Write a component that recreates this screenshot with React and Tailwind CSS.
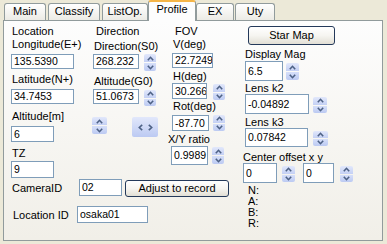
const Label = ({ children, className = "" }) => (
  <div className={`h-[12px] leading-[12px] whitespace-nowrap ${className}`}>{children}</div>
);

const Field = ({ value, className = "" }) => (
  <div
    className={`flex items-center shrink-0 overflow-hidden whitespace-nowrap bg-white border border-[#7f9db9] pl-[2px] text-[10.5px] leading-none ${className}`}
  >
    {value}
  </div>
);

const Chevron = ({ dir }) => {
  const d = {
    up: "M0.8 4.2 L3.5 1.3 L6.2 4.2",
    down: "M0.8 0.8 L3.5 3.7 L6.2 0.8",
  }[dir];
  return (
    <svg width="7" height="5" viewBox="0 0 7 5">
      <path d={d} fill="none" stroke="#4d6185" strokeWidth="1.6" />
    </svg>
  );
};

const SideChevron = ({ dir }) => {
  const d = dir === "left" ? "M4.2 0.8 L1.3 3.5 L4.2 6.2" : "M0.8 0.8 L3.7 3.5 L0.8 6.2";
  return (
    <svg width="5" height="7" viewBox="0 0 5 7">
      <path d={d} fill="none" stroke="#4d6185" strokeWidth="1.6" />
    </svg>
  );
};

// XP style up/down spinner
const Spin = ({ className = "" }) => (
  <div className={`flex flex-col gap-px shrink-0 ${className}`}>
    <div className="flex-1 flex items-center justify-center rounded-t-[2px] bg-linear-to-b from-[#e2e8fb] to-[#c4d0f4]">
      <Chevron dir="up" />
    </div>
    <div className="flex-1 flex items-center justify-center rounded-b-[2px] bg-linear-to-b from-[#d6dff9] to-[#bccaf2]">
      <Chevron dir="down" />
    </div>
  </div>
);

const Button = ({ children, className = "" }) => (
  <div
    className={`flex items-center justify-center shrink-0 rounded-[3px] border border-[#24395a] bg-linear-to-b from-white via-[#f6f5f1] to-[#e2dfd5] leading-none ${className}`}
  >
    {children}
  </div>
);

const tabIdle =
  "h-[17px] border border-b-0 border-[#919b9c] rounded-t-[3px] bg-linear-to-b from-white to-[#ecebe5] text-center leading-[14px]";

export default function App() {
  return (
    <div className="w-[387px] h-[244px] overflow-hidden bg-[#ece9d8] text-black text-[11px] font-['Liberation_Sans',Arial,sans-serif]">
      {/* Tabs */}
      <div className="h-[20px] flex items-end">
        <div className={`ml-[4px] w-[42px] ${tabIdle}`}>Main</div>
        <div className={`ml-[2px] w-[52px] ${tabIdle}`}>Classify</div>
        <div className={`ml-[2px] w-[46px] ${tabIdle}`}>ListOp.</div>
        <div className="relative z-10 -mb-px w-[48px] h-[21px] border-x border-[#919b9c] border-t-2 border-t-[#f5b548] rounded-t-[3px] bg-[#fdfdfd] text-center leading-[14px]">
          Profile
        </div>
        <div className={`w-[38px] ${tabIdle}`}>EX</div>
        <div className={`ml-px w-[40px] ${tabIdle}`}>Uty</div>
      </div>

      {/* Tab page */}
      <div className="ml-[3px] w-[380px] h-[221px] border border-[#919b9c] bg-linear-to-b from-[#fdfdfd] to-[#f1efe8] flex pt-[4px]">
        <div className="ml-[7px] w-[232px] flex flex-col">
          <div className="flex">
            {/* Location */}
            <div className="w-[82px] flex flex-col items-start">
              <Label className="ml-px">Location</Label>
              <Label className="ml-px mt-px">Longitude(E+)</Label>
              <Field value="135.5390" className="mt-[4px] w-[63px] h-[15px]" />
              <Label className="ml-px mt-[4px]">Latitude(N+)</Label>
              <Field value="34.7453" className="mt-[4px] w-[63px] h-[15px]" />
              <Label className="ml-px mt-[6px]">Altitude[m]</Label>
              <Field value="6" className="mt-[4px] w-[43px] h-[16px]" />
              <Label className="ml-px mt-[5px]">TZ</Label>
              <Field value="9" className="mt-[2px] w-[43px] h-[17px]" />
            </div>

            {/* Direction */}
            <div className="w-[79px] flex flex-col items-start">
              <Label className="ml-[3px]">Direction</Label>
              <Label className="ml-px mt-[3px]">Direction(S0)</Label>
              <div className="mt-[2px] flex items-start">
                <Field value="268.232" className="w-[46px] h-[15px]" />
                <Spin className="ml-[5px] w-[12px] h-[17px]" />
              </div>
              <Label className="ml-px mt-[4px]">Altitude(G0)</Label>
              <div className="mt-[2px] flex items-start">
                <Field value="51.0673" className="w-[46px] h-[15px]" />
                <Spin className="ml-[5px] mt-px w-[12px] h-[16px]" />
              </div>
              <div className="mt-[11px] -ml-px flex items-start">
                <Spin className="w-[15px] h-[17px]" />
                <div className="ml-[25px] w-[26px] h-[20px] flex items-center justify-center gap-[5px] rounded-[2px] bg-linear-to-b from-[#e2e8fb] to-[#bccaf2]">
                  <SideChevron dir="left" />
                  <SideChevron dir="right" />
                </div>
              </div>
            </div>

            {/* FOV */}
            <div className="flex flex-col items-start">
              <Label className="ml-[3px]">FOV</Label>
              <Label className="ml-px mt-px">V(deg)</Label>
              <Field value="22.7249" className="mt-[3px] w-[41px] h-[15px]" />
              <Label className="ml-px mt-[2px]">H(deg)</Label>
              <div className="mt-px flex items-start">
                <Field value="30.2665" className="w-[35px] h-[16px]" />
                <Spin className="ml-[6px] mt-px w-[12px] h-[16px]" />
              </div>
              <Label className="ml-px">Rot(deg)</Label>
              <div className="mt-[3px] flex items-start">
                <Field value="-87.70" className="w-[37px] h-[16px]" />
                <Spin className="ml-[4px] w-[12px] h-[16px]" />
              </div>
              <Label className="-ml-[4px] mt-[2px]">X/Y ratio</Label>
              <div className="mt-px -ml-px flex items-start">
                <Field value="0.9989" className="w-[37px] h-[19px]" />
                <Spin className="ml-[4px] mt-px w-[12px] h-[17px]" />
              </div>
            </div>
          </div>

          <div className="mt-px flex items-start">
            <div className="ml-px mt-[3px] w-[67px] leading-[12px]">CameraID</div>
            <Field value="02" className="w-[43px] h-[17px]" />
            <Button className="ml-[3px] mt-px w-[104px] h-[17px]">Adjust to record</Button>
          </div>
          <div className="mt-[9px] flex items-start">
            <div className="ml-[2px] mt-[3px] w-[64px] leading-[12px]">Location ID</div>
            <Field value="osaka01" className="w-[71px] h-[17px]" />
          </div>
        </div>

        {/* Display */}
        <div className="flex flex-col items-start">
          <Button className="ml-[5px] mt-px w-[87px] h-[19px]">Star Map</Button>
          <Label className="ml-[2px] mt-[3px]">Display Mag</Label>
          <div className="ml-[2px] mt-px flex items-start">
            <Field value="6.5" className="w-[38px] h-[20px]" />
            <Spin className="ml-[3px] mt-[2px] w-[13px] h-[17px]" />
          </div>
          <Label className="ml-[2px] mt-px">Lens k2</Label>
          <div className="ml-[2px] flex items-start">
            <Field value="-0.04892" className="w-[64px] h-[20px]" />
            <Spin className="ml-[4px] mt-[3px] w-[14px] h-[16px]" />
          </div>
          <Label className="ml-[2px] mt-[2px]">Lens k3</Label>
          <div className="ml-[2px] flex items-start">
            <Field value="0.07842" className="w-[63px] h-[19px]" />
            <Spin className="ml-[5px] mt-[3px] w-[15px] h-[15px]" />
          </div>
          <Label className="mt-[4px]">Center offset x y</Label>
          <div className="flex items-start">
            <Field value="0" className="w-[34px] h-[20px]" />
            <Spin className="ml-[5px] mt-[3px] w-[13px] h-[16px]" />
            <Field value="0" className="ml-[8px] w-[31px] h-[20px]" />
            <Spin className="ml-[6px] mt-[3px] w-[13px] h-[16px]" />
          </div>
          <div className="ml-[5px] mt-[2px] leading-[11px]">
            <div>N:</div>
            <div>A:</div>
            <div>B:</div>
            <div>R:</div>
          </div>
        </div>
      </div>
    </div>
  );
}
